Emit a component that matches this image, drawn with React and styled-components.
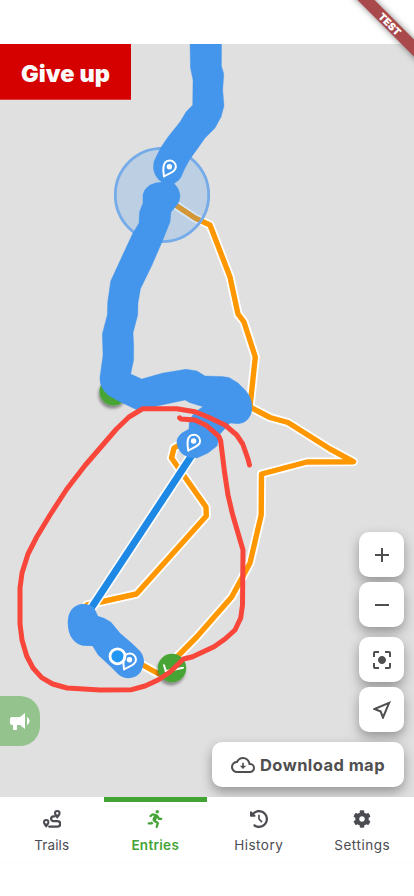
import React from 'react';
import styled, { createGlobalStyle } from 'styled-components';
import { MdAdd, MdRemove, MdCenterFocusStrong, MdOutlineNearMe } from 'react-icons/md';
import { FaRunning, FaCog } from 'react-icons/fa';
import { FaClockRotateLeft } from 'react-icons/fa6';

const GlobalStyle = createGlobalStyle`
  * { box-sizing: border-box; }
  body { margin: 0; background: #fff; font-family: Inter, sans-serif; }
  button { font: inherit; border: 0; padding: 0; margin: 0; }
`;

const Screen = styled.div`
  display: flex;
  flex-direction: column;
  position: relative;
  width: 414px;
  height: 896px;
  overflow: hidden;
  background: #fff;
`;

const StatusBar = styled.div`
  flex: 0 0 44px;
`;

const MapArea = styled.main`
  position: relative;
  flex: 0 0 753px;
  background: #e0e0e0;
  overflow: hidden;
`;

const MapDrawing = styled.svg`
  position: absolute;
  inset: 0;
`;

const GiveUpButton = styled.button`
  position: absolute;
  left: 0;
  top: 0;
  width: 131px;
  height: 56px;
  display: flex;
  align-items: center;
  justify-content: center;
  background: #d50000;
  border-bottom: 1px solid #e03c3c;
  color: #fafafa;
  font-size: 23.5px;
  font-weight: 900;
  letter-spacing: 0.05px;
  padding-top: 4px;
  white-space: nowrap;
`;

const Controls = styled.div`
  position: absolute;
  right: 10px;
  bottom: 10px;
  display: flex;
  flex-direction: column;
  align-items: flex-end;
  gap: 10px;
`;

const ControlGroup = styled.div`
  display: flex;
  flex-direction: column;
  gap: 5px;
`;

const ControlButton = styled.button`
  display: flex;
  align-items: center;
  justify-content: center;
  gap: 5px;
  width: ${({ $wide }) => ($wide ? '192px' : '45px')};
  height: 45px;
  border-radius: 10px;
  background: #fff;
  color: #4f4f4f;
  box-shadow: 0 5px 12px rgba(0, 0, 0, 0.34);
  svg { width: 24px; height: 24px; flex: none; }
`;

const ControlLabel = styled.span`
  font-size: 16.5px;
  font-weight: 700;
  letter-spacing: 0.43px;
  white-space: nowrap;
`;

const AnnounceButton = styled.button`
  position: absolute;
  left: 0;
  top: 652px;
  width: 40px;
  height: 50px;
  display: flex;
  align-items: center;
  padding-left: 8px;
  border-radius: 0 20px 20px 0;
  background: #94c38e;
  color: #fff;
`;

const TabBar = styled.nav`
  position: relative;
  display: grid;
  grid-template-columns: repeat(4, 1fr);
  height: 66px;
  flex: none;
  background: #fff;
  border-bottom: 1px solid #fbfbfb;
`;

const Tab = styled.a`
  display: flex;
  flex-direction: column;
  align-items: center;
  border-top: 5px solid ${({ $active }) => ($active ? '#43a335' : 'transparent')};
  color: ${({ $active }) => ($active ? '#43a335' : '#4b4b52')};
  padding-top: 8px;
  gap: 7px;
  svg { display: block; width: 18px; height: 18px; }
`;

const TabLabel = styled.span`
  font-size: 13.5px;
  line-height: 20px;
  font-weight: ${({ $active }) => ($active ? 600 : 400)};
  letter-spacing: ${({ $spacing }) => $spacing}px;
`;

const BannerClip = styled.div`
  position: absolute;
  top: 0;
  right: 0;
  width: 80px;
  height: 80px;
  overflow: hidden;
  pointer-events: none;
`;

const Banner = styled.div`
  position: absolute;
  right: -24px;
  top: 18px;
  width: 96px;
  height: 12px;
  transform: rotate(45deg);
  background: #aa494b;
  box-shadow: 0 0 6px rgba(0, 0, 0, 0.5);
  color: #fff;
  font-size: 10.2px;
  line-height: 12px;
  font-weight: 900;
  text-align: center;
`;

const BLUE = '#4496ec';
const trails = [
  'M162 196L195 218L210 225L230 277L238 314L244 322L255.3 357L250 407L270 417.5L288 422.5L330 449L353.5 461.7L307 462L261.5 474L261.2 515L250 563L231.7 597L196.7 637L172 662',
  'M190 441L181 444L174 448L171.5 458L206 507L206.3 516L136.5 594L87 605',
  'M130 658L158 673.5L172 668',
];
const upperBand = 'M190 43L190.5 68L193 80L192.7 105L186 112L180 122L168 137L160.5 148L154 161.5Q152.5 169 155 174Q157 179 162 182Q155 182.5 150 185Q144 189 143 195L143 203L139.5 212L139 223L132.5 234L125 250L110.7 281L107.7 302L107.3 315L102.3 334L103 355L100 377Q99 387 108 395L120 401.7L133 408Q138 411 142 410.3L157 406L185 400L190 402.7L203 406.7L195 412L189.3 420L189 429L182 433Q176 438 177 443Q178 451 184 455L190 457.6L197 458L208 453L217 446L220 434L230 423L238 423.7Q244 423.5 248 419Q252 414 252 408Q252 398 246 391L238 383L229 377.5L222 376.5L205 376L197 371L186 369.3L163 373L141.7 379L130.7 374L133.6 360L133.7 346L133 333L137.7 315L138 303L140.4 289L152 265L162 242L170 222L171 212L177 205Q180 201 180 196Q180 189 174 183.5Q180 180 181.5 176L184.5 169L190 159L198 148L205 138L215 128L221 117L224 106L222.7 90L223.8 74L221.4 66L221.5 43Z';
const lowerBand = 'M67.7 622Q68 614 72 609Q77 604 83 604Q90 604 94 607.5L98 616L104 618L111 622L120 633L131.7 643L140 651Q144 656 144 662Q143 669 139.5 673.5Q134 679 126 678Q120 677 116 672L111 667L98 655L92.5 646L83 645.8Q76 644 72.5 639Q68 634 67.7 622Z';
const marking = 'M249.5 465L248 459L242.7 444L236.7 435L225 425L208 417L195 411.7L176.7 408.8L142.5 408.8L129 417L116.5 429L85 465.5L66.5 489.5L50 515L36.7 537L28 554L22 573L20 588L20 624L22 640L26.7 656L33 668L41.7 677.7L52.7 684L67 688L100 690L131.7 689.7L145 686L158 680L170 672L183.5 659L192 657L214 646.7L225 639L235 630L240.7 618L242.5 605L243 550L232.7 515L228 495L224.5 472L220.7 441L219 436.7L206.5 425.5L195 420L181 419L179.7 417.8';

function PinMark({ x, y }) {
  return (
    <g transform={`translate(${x} ${y})`}>
      <path d="M-5.4 9.6C-6.2 5.5-6.3 2.5-5.9-.2C-5.3-3.8-2.8-6.2.4-6.2A6.1 6.1 0 0 1 6.5-.1C6.5 4.3 1.5 5.8-5.4 9.6Z" fill="none" stroke="#fff" strokeWidth="2" strokeLinejoin="round" />
      <circle cx="0" cy="0" r="2.7" fill="#fff" />
    </g>
  );
}

function TrailMap() {
  return (
    <MapDrawing width="414" height="753" viewBox="0 44 414 753">
      <defs>
        <filter id="shade" x="-50%" y="-50%" width="200%" height="200%">
          <feDropShadow dx="-1" dy="3" stdDeviation="1.8" floodOpacity="0.4" />
        </filter>
      </defs>
      <g fill="none" strokeLinejoin="round" strokeLinecap="round">
        {trails.map((d) => <path key={d} d={d} stroke="#fff" strokeWidth="9" />)}
        {trails.map((d) => <path key={d} d={d} stroke="#ff9800" strokeWidth="5.4" />)}
      </g>
      <circle cx="113.5" cy="391.5" r="14" fill="#46a435" filter="url(#shade)" />
      <circle cx="172" cy="668" r="14.2" fill="#46a435" filter="url(#shade)" />
      <path d="M164 665.3L165.6 670.5M165.6 671L173 670L183 667.8" fill="none" stroke="#fff" strokeWidth="2" strokeLinecap="round" />
      <circle cx="162" cy="195" r="46.7" fill="rgba(68,150,236,.23)" stroke="#75abe9" strokeWidth="2.8" />
      <path d="M192 455L88 613" stroke="#fff" strokeWidth="10.4" />
      <path d="M192 455L88 613" stroke="#1e88e5" strokeWidth="7" />
      <path d={upperBand} fill={BLUE} stroke={BLUE} strokeWidth=".4" strokeLinejoin="round" />
      <path d={lowerBand} fill={BLUE} />
      <circle cx="117.5" cy="656.3" r="7.5" fill="#2196f3" stroke="#fff" strokeWidth="2.8" />
      <PinMark x={169.4} y={166.8} />
      <PinMark x={193.6} y={441} />
      <PinMark x={129.5} y={659.8} />
      <path d={marking} fill="none" stroke="#f8463a" strokeWidth="5" strokeLinecap="round" strokeLinejoin="round" />
    </MapDrawing>
  );
}

function TrailsIcon() {
  return (
    <svg viewBox="0 0 18 18" fill="none">
      <path fillRule="evenodd" fill="currentColor" d="M14.3 0A3.3 3.3 0 0 1 17.6 3.3C17.6 5.2 15.8 7.2 14.3 8.8C12.8 7.2 11 5.2 11 3.3A3.3 3.3 0 0 1 14.3 0ZM14.3 2.1A1.2 1.2 0 1 0 14.3 4.5A1.2 1.2 0 1 0 14.3 2.1ZM3.2 9A3.2 3.2 0 0 1 6.4 12.2C6.4 14.1 4.7 16.1 3.2 17.8C1.7 16.1 0 14.1 0 12.2A3.2 3.2 0 0 1 3.2 9ZM3.2 11A1.2 1.2 0 1 0 3.2 13.4A1.2 1.2 0 1 0 3.2 11Z" />
      <path d="M11.6 6.4H10.5A2 2 0 0 0 10.5 11.1H14.5A2.7 2.7 0 0 1 14.5 16.6H6.2" stroke="currentColor" strokeWidth="2.3" strokeLinecap="round" />
    </svg>
  );
}

function DownloadIcon() {
  return (
    <svg viewBox="0 0 24 24" fill="currentColor">
      <path d="M19.35 10.04A7.49 7.49 0 0 0 12 4C9.11 4 6.6 5.64 5.35 8.04A5.994 5.994 0 0 0 0 14c0 3.31 2.69 6 6 6h13c2.76 0 5-2.24 5-5 0-2.64-2.05-4.78-4.65-4.96zM19 18H6c-2.21 0-4-1.79-4-4 0-2.05 1.53-3.76 3.56-3.97l1.07-.11.5-.95A5.469 5.469 0 0 1 12 6c2.62 0 4.88 1.86 5.39 4.43l.3 1.5 1.53.11A2.98 2.98 0 0 1 22 15c0 1.65-1.35 3-3 3z" />
      <path d="M11.2 9.8h1.6v3h2.4L12 16.1 8.8 12.8h2.4z" />
    </svg>
  );
}

function MegaphoneIcon() {
  return (
    <svg width="24" height="24" viewBox="0 0 24 24" fill="currentColor">
      <path d="M12 8H4A2 2 0 0 0 2 10V14A2 2 0 0 0 4 16H5V20A1 1 0 0 0 6 21H8A1 1 0 0 0 9 20V16H12L17 20V4L12 8M21.5 12C21.5 13.71 20.54 15.26 19 16V8C20.53 8.75 21.5 10.3 21.5 12Z" />
    </svg>
  );
}

const tabs = [
  { label: 'Trails', Icon: TrailsIcon, spacing: 0.1 },
  { label: 'Entries', Icon: FaRunning, active: true, spacing: 0.3 },
  { label: 'History', Icon: FaClockRotateLeft, spacing: 0.45 },
  { label: 'Settings', Icon: FaCog, spacing: 0.55 },
];

export default function App() {
  return (
    <Screen>
      <GlobalStyle />
      <StatusBar />
      <MapArea>
        <TrailMap />
        <GiveUpButton>Give up</GiveUpButton>
        <AnnounceButton aria-label="Announcements"><MegaphoneIcon /></AnnounceButton>
        <Controls>
          <ControlGroup>
            <ControlButton aria-label="Zoom in"><MdAdd /></ControlButton>
            <ControlButton aria-label="Zoom out"><MdRemove /></ControlButton>
          </ControlGroup>
          <ControlGroup>
            <ControlButton aria-label="Fit trail"><MdCenterFocusStrong /></ControlButton>
            <ControlButton aria-label="My location"><MdOutlineNearMe /></ControlButton>
          </ControlGroup>
          <ControlButton $wide>
            <DownloadIcon />
            <ControlLabel>Download map</ControlLabel>
          </ControlButton>
        </Controls>
      </MapArea>
      <TabBar>
        {tabs.map(({ label, Icon, active, spacing }) => (
          <Tab key={label} $active={active}>
            <Icon />
            <TabLabel $active={active} $spacing={spacing}>{label}</TabLabel>
          </Tab>
        ))}
      </TabBar>
      <BannerClip><Banner>TEST</Banner></BannerClip>
    </Screen>
  );
}
